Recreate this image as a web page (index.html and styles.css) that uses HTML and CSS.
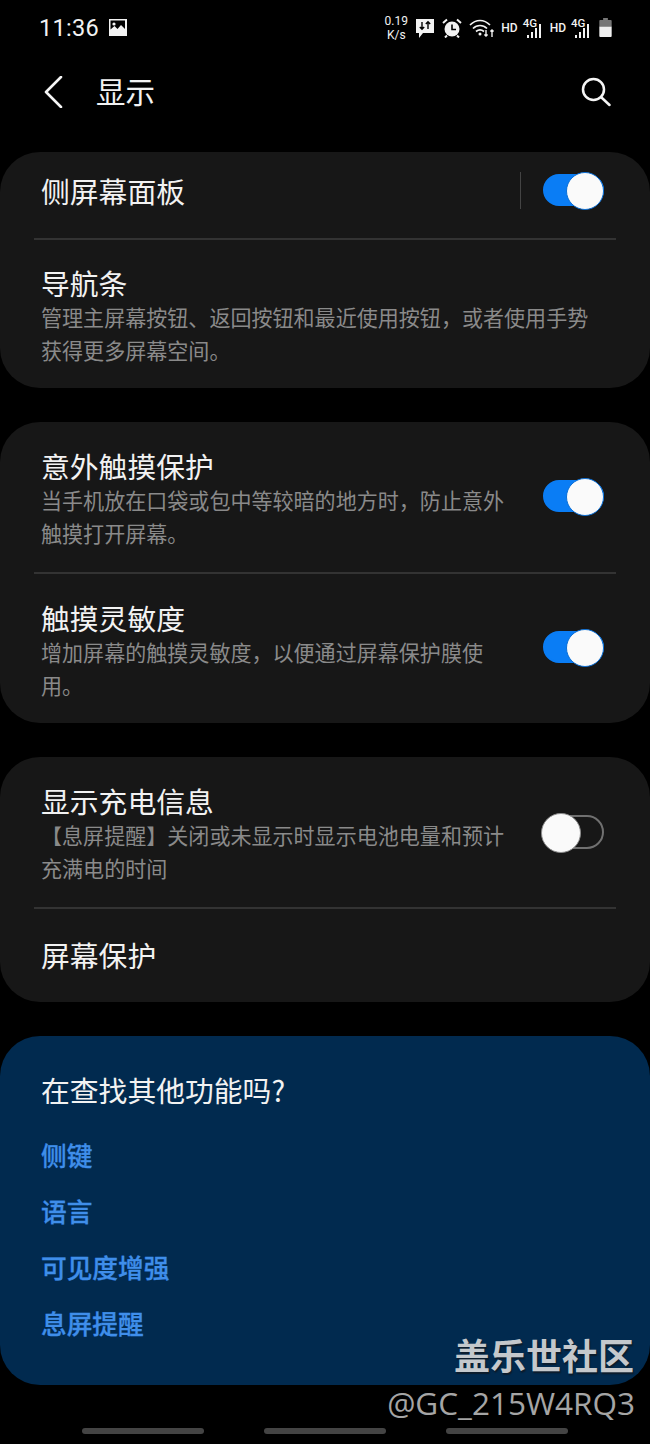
FILE: index.html
```html
<!DOCTYPE html>
<html lang="zh-CN">
<head>
  <meta charset="UTF-8" />
  <title>显示</title>
  <link rel="stylesheet" href="styles.css">
</head>
<body>
  <div class="phone">
    <div class="status-bar">
      <div class="status-left">
        <span class="clock">11:36</span>
        <svg class="ic-photo" viewBox="0 0 18 18"><path fill="#f2f2f2" fill-rule="evenodd" d="M0 1h18v17H0zM1.500 2.500v9l4-3.500 3 3 3.500-4 4 4V2.500z"/><circle cx="5" cy="6" r="1.600" fill="#f2f2f2"/></svg>
      </div>
      <div class="status-right">
        <span class="speed">0.19<br>K/s</span>
        <svg class="ic-msg" viewBox="0 0 20 20"><path fill="#f2f2f2" d="M1 1h18v14H8l-4 5v-5H1z"/><path stroke="#000" stroke-width="1.400" fill="none" d="M7 4v7M4.800 9 7 11.200 9.200 9M13 11V4M10.800 6 13 3.800 15.200 6"/></svg>
        <svg class="ic-alarm" viewBox="0 0 20 20"><circle cx="10" cy="11" r="7.500" fill="#f2f2f2"/><path stroke="#000" stroke-width="1.600" fill="none" d="M10 6.500V11.500H14"/><path stroke="#f2f2f2" stroke-width="2" fill="none" d="M1 5 5 1.500M19 5 15 1.500M5 17.500l-2 2M15 17.500l2 2"/></svg>
        <svg class="ic-wifi" viewBox="0 0 26 20"><path stroke="#f2f2f2" stroke-width="1.700" fill="none" d="M1 7c6-6 14-6 20 0M4 10.500c4-4 10-4 14 0M7 13.500c2.400-2 5.600-2 8 0"/><circle cx="11" cy="16" r="1.500" fill="#f2f2f2"/><path stroke="#f2f2f2" stroke-width="1.400" fill="none" d="M17 12v6M15.400 16.400 17 18l1.600-1.600M23 19v-7M21.400 13.600 23 12l1.600 1.600"/></svg>
        <span class="hd">HD</span>
        <span class="signal"><span class="net">4G</span><svg viewBox="0 0 18 20"><path fill="#f2f2f2" d="M1 17h2v3H1zM5 14h2v6H5zM9 10h2v10H9zM13 6h2v14h-2z"/></svg></span>
        <span class="hd">HD</span>
        <span class="signal"><span class="net">4G</span><svg viewBox="0 0 18 20"><path fill="#f2f2f2" d="M1 17h2v3H1zM5 14h2v6H5zM9 10h2v10H9zM13 6h2v14h-2z"/></svg></span>
        <svg class="ic-battery" viewBox="0 0 13 20"><path fill="#777" d="M4 0h5v2h3a1 1 0 0 1 1 1v6H0V3a1 1 0 0 1 1-1h3z"/><path fill="#f0f0f0" d="M0 9h13v10a1 1 0 0 1-1 1H1a1 1 0 0 1-1-1z"/></svg>
      </div>
    </div>

    <header class="app-bar">
      <svg class="ic-back" viewBox="0 0 20 32"><path d="M17 1 2 16l15 15" fill="none" stroke="#f5f5f5" stroke-width="2.600" stroke-linecap="round" stroke-linejoin="round"/></svg>
      <h1>显示</h1>
      <svg class="ic-search" viewBox="0 0 30 30"><circle cx="12.500" cy="12.500" r="10.500" fill="none" stroke="#f5f5f5" stroke-width="2.500"/><path d="M20.500 20.500 28.500 28" stroke="#f5f5f5" stroke-width="2.500" stroke-linecap="round"/></svg>
    </header>

    <section class="card">
      <div class="row row-edge">
        <div class="row-text"><div class="title">侧屏幕面板</div></div>
        <span class="vline"></span>
        <span class="switch on"></span>
      </div>
      <div class="line"></div>
      <div class="row row-nav">
        <div class="row-text wide">
          <div class="title">导航条</div>
          <div class="sub">管理主屏幕按钮、返回按钮和最近使用按钮，或者使用手势获得更多屏幕空间。</div>
        </div>
      </div>
    </section>

    <section class="card">
      <div class="row row-two">
        <div class="row-text">
          <div class="title">意外触摸保护</div>
          <div class="sub">当手机放在口袋或包中等较暗的地方时，防止意外触摸打开屏幕。</div>
        </div>
        <span class="switch on"></span>
      </div>
      <div class="line"></div>
      <div class="row row-two short">
        <div class="row-text">
          <div class="title">触摸灵敏度</div>
          <div class="sub">增加屏幕的触摸灵敏度，以便通过屏幕保护膜使用。</div>
        </div>
        <span class="switch on"></span>
      </div>
    </section>

    <section class="card">
      <div class="row row-two">
        <div class="row-text">
          <div class="title">显示充电信息</div>
          <div class="sub">【息屏提醒】关闭或未显示时显示电池电量和预计充满电的时间</div>
        </div>
        <span class="switch"></span>
      </div>
      <div class="line"></div>
      <div class="row row-saver">
        <div class="row-text"><div class="title">屏幕保护</div></div>
      </div>
    </section>

    <section class="card card-blue">
      <div class="title">在查找其他功能吗?</div>
      <a class="link" href="#">侧键</a>
      <a class="link" href="#">语言</a>
      <a class="link" href="#">可见度增强</a>
      <a class="link" href="#">息屏提醒</a>
    </section>

    <div class="nav-pills">
      <span></span><span></span><span></span>
    </div>

    <div class="mark">
      <div class="mark-cn">盖乐世社区</div>
      <div class="mark-id">@GC_215W4RQ3</div>
    </div>
  </div>
</body>
</html>
```

FILE: styles.css
```css
* {
  box-sizing: border-box;
}

body {
  margin: 0;
  background: #000;
  font-family: "Noto Sans CJK SC", "Roboto", sans-serif;
  color: #f2f2f2;
}

.phone {
  position: relative;
  width: 650px;
  height: 1444px;
  overflow: hidden;
}

/* status bar */
.status-bar {
  height: 56px;
  padding: 0 38px 0 39px;
  display: flex;
  justify-content: space-between;
  align-items: center;
}
.status-left {
  display: flex;
  align-items: center;
  gap: 10px;
}
.clock {
  font-family: "Roboto", sans-serif;
  font-size: 23.5px;
  letter-spacing: 0.3px;
}
.ic-photo {
  width: 18px;
  height: 18px;
  margin-bottom: 3px;
}
.status-right {
  display: flex;
  align-items: center;
}
.speed {
  font-family: "Roboto", sans-serif;
  font-size: 12px;
  line-height: 14.2px;
  text-align: center;
  width: 26px;
}
.ic-msg {
  width: 20px;
  height: 20px;
  margin-left: 6px;
}
.ic-alarm {
  width: 20px;
  height: 20px;
  margin-left: 7px;
}
.ic-wifi {
  width: 26px;
  height: 20px;
  margin-left: 7px;
}
.hd {
  font-family: "Roboto", sans-serif;
  font-size: 12px;
  font-weight: 500;
  margin-left: 6px;
}
.signal {
  position: relative;
  display: block;
  width: 21px;
  height: 20px;
  margin-left: 5px;
}
.signal svg {
  display: block;
  width: 18px;
  height: 20px;
  margin-left: 3px;
}
.net {
  position: absolute;
  left: 0;
  top: -2px;
  font-family: "Roboto", sans-serif;
  font-size: 11.5px;
  font-weight: 500;
}
.ic-battery {
  width: 13px;
  height: 19px;
  margin-left: 7px;
  margin-bottom: 1px;
}

/* header */
.app-bar {
  height: 96px;
  display: flex;
  align-items: center;
  padding: 0 39px 24px 44px;
}
.ic-back {
  width: 20px;
  height: 32px;
}
.app-bar h1 {
  margin: 0 0 4px 32px;
  font-size: 29.5px;
  font-weight: 400;
  flex: 1;
}
.ic-search {
  width: 30px;
  height: 30px;
}

/* cards */
.card {
  background: #171717;
  border-radius: 40px;
  margin-bottom: 34px;
}
.row {
  display: flex;
  align-items: flex-start;
  padding: 0 46px 0 41px;
}
.row-edge {
  height: 86px;
  align-items: center;
}
.row-edge .row-text {
  padding-bottom: 8px;
}
.row-nav {
  height: 148px;
  padding-top: 24px;
}
.row-two {
  height: 150px;
  padding-top: 25px;
}
.row-two.short {
  height: 149px;
}
.row-saver {
  height: 93px;
  align-items: center;
  padding-bottom: 2px;
}
.row-text {
  flex: 1;
  max-width: 466px;
}
.row-text.wide {
  max-width: 550px;
}
.title {
  font-size: 28.8px;
  line-height: 38px;
}
.sub {
  font-size: 21.05px;
  line-height: 32.5px;
  color: #8a8a8a;
  margin-top: -1px;
}
.line {
  height: 2px;
  margin: 0 34px;
  background: #333;
}
.vline {
  width: 1px;
  height: 37px;
  background: #444;
  margin: 0 0 10px auto;
}

/* switches */
.switch {
  position: relative;
  flex: none;
  display: block;
  width: 61px;
  height: 34px;
  margin-left: auto;
  border-radius: 17px;
  border: 2px solid #707070;
}
.row-two .switch {
  margin-top: 33px;
}
.row-edge .switch {
  margin-left: 22px;
  margin-bottom: 10px;
}
.switch::after {
  content: "";
  position: absolute;
  left: -4px;
  top: -4px;
  width: 38px;
  height: 38px;
  border-radius: 50%;
  background: #fafafa;
  border: 1.5px solid #8c8c8c;
}
.switch.on {
  height: 32px;
  background: #0a7df5;
  border-color: #0a7df5;
}
.row-two .switch.on {
  margin-top: 33px;
}
.row-two.short .switch.on {
  margin-top: 32px;
}
.switch.on::after {
  left: auto;
  right: -2px;
  top: -4px;
  width: 36px;
  height: 36px;
  border-color: #0b6fd6;
}

/* suggestions */
.card-blue {
  background: #012a4f;
  height: 349px;
  margin: 0;
  padding: 35px 41px 0;
}
.link {
  display: block;
  margin-top: 18px;
  font-size: 25.7px;
  font-weight: 500;
  line-height: 38px;
  color: #3f8eea;
  text-decoration: none;
  -webkit-text-stroke: 0.3px #3f8eea;
}
.card-blue .title + .link {
  margin-top: 27px;
}

/* gesture pills */
.nav-pills {
  display: flex;
  justify-content: center;
  gap: 60px;
  margin-top: 43px;
}
.nav-pills span {
  width: 122px;
  height: 6px;
  border-radius: 3px;
  background: #444;
}

/* watermark */
.mark {
  position: absolute;
  right: 15px;
  top: 1329px;
  text-align: right;
}
.mark-cn {
  font-size: 36px;
  font-weight: 700;
  line-height: 50px;
  color: #c4c8cc;
  text-shadow: 1px 2px 1px #0c1c2c;
  padding-right: 1px;
}
.mark-id {
  font-family: "Open Sans", sans-serif;
  font-size: 31.5px;
  line-height: 44px;
  margin-top: 2px;
  color: #a5a5a5;
}
```
